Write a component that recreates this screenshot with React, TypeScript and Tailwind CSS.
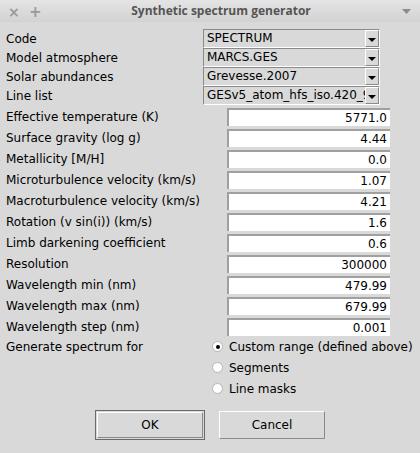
import React from "react";

const font = { fontFamily: '"DejaVu Sans", sans-serif' };

function Dropdown({ value }: { value: string }) {
  return (
    <div className="flex h-[19px] w-[177px] border border-t-[#8a8a8a] border-l-[#8a8a8a] border-r-[#ffffff] border-b-[#ffffff] bg-[#d9d9d9]">
      <div className="flex-1 overflow-hidden whitespace-nowrap pl-[3px] text-[12px] leading-[17px] text-black">{value}</div>
      <div className="flex h-[17px] w-[14px] items-center justify-center border border-t-[#ffffff] border-l-[#ffffff] border-r-[#8a8a8a] border-b-[#8a8a8a] bg-[#d9d9d9]">
        <svg width="8" height="6" viewBox="0 0 8 6" className="mt-[5px]">
          <path d="M0 0 L8 0 L4 4 Z" fill="#000" />
        </svg>
      </div>
    </div>
  );
}

function Entry({ value }: { value: string }) {
  return (
    <div className="h-[18px] w-[163px] border-t-2 border-l-2 border-t-[#a0a0a0] border-l-[#a0a0a0] bg-white pr-[3px] text-right text-[12px] leading-[16px] text-black">
      {value}
    </div>
  );
}

function Radio({ checked, label }: { checked?: boolean; label: string }) {
  return (
    <div className="flex h-[21px] items-center">
      <div className="ml-[212px] flex h-[11px] w-[11px] items-center justify-center rounded-full border border-[#b5b5b5] bg-white">
        {checked && <div className="h-[4px] w-[4px] rounded-full bg-black" />}
      </div>
      <span className="ml-[6px] text-[12px] text-black">{label}</span>
    </div>
  );
}

export default function App() {
  const dropdowns: [string, string][] = [
    ["Code", "SPECTRUM"],
    ["Model atmosphere", "MARCS.GES"],
    ["Solar abundances", "Grevesse.2007"],
    ["Line list", "GESv5_atom_hfs_iso.420_920.txt"],
  ];
  const entries: [string, string][] = [
    ["Effective temperature (K)", "5771.0"],
    ["Surface gravity (log g)", "4.44"],
    ["Metallicity [M/H]", "0.0"],
    ["Microturbulence velocity (km/s)", "1.07"],
    ["Macroturbulence velocity (km/s)", "4.21"],
    ["Rotation (v sin(i)) (km/s)", "1.6"],
    ["Limb darkening coefficient", "0.6"],
    ["Resolution", "300000"],
    ["Wavelength min (nm)", "479.99"],
    ["Wavelength max (nm)", "679.99"],
    ["Wavelength step (nm)", "0.001"],
  ];
  return (
    <div className="flex h-[453px] w-[420px] flex-col bg-[#d9d9d9]" style={font}>
      <div className="relative flex h-[22px] items-center bg-gradient-to-b from-[#e4e4e4] to-[#d2d2d2]">
        <span className="absolute left-[8px] top-[2px] text-[14px] font-bold text-[#9a9a9a]">×</span>
        <span className="absolute left-[29px] top-[1px] text-[15px] font-bold text-[#9a9a9a]">+</span>
        <div className="flex-1 pl-[22px] text-center text-[12px] font-bold text-[#555555]" style={{ fontFamily: '"Open Sans", sans-serif' }}>
          Synthetic spectrum generator
        </div>
        <svg width="9" height="6" viewBox="0 0 9 6" className="absolute left-[402px] top-[9px]">
          <path d="M0 0 L9 0 L4.5 5 Z" fill="#8a8a8a" />
        </svg>
      </div>
      <div className="pt-[7px]">
        {dropdowns.map(([l, v]) => (
          <div key={l} className="flex h-[19px] items-center">
            <div className="w-[203px] pl-[6px] text-[12px] text-black">{l}</div>
            <Dropdown value={v} />
          </div>
        ))}
        <div className="h-[3px]" />
        {entries.map(([l, v]) => (
          <div key={l} className="flex h-[21px] items-start">
            <div className="w-[227px] pl-[6px] pt-[1px] text-[12px] leading-[16px] text-black">{l}</div>
            <Entry value={v} />
          </div>
        ))}
        <div className="-mt-[3px]">
          <div className="relative">
            <span className="absolute left-[6px] top-[2px] text-[12px] text-black">Generate spectrum for</span>
            <Radio checked label="Custom range (defined above)" />
          </div>
          <Radio label="Segments" />
          <Radio label="Line masks" />
        </div>
        <div className="mt-[11px] flex items-center">
          <div className="ml-[95px] border border-[#6a6a6a] p-[1px]">
            <div className="flex h-[26px] w-[106px] items-center justify-center border border-t-[#ffffff] border-l-[#ffffff] border-r-[#8a8a8a] border-b-[#8a8a8a] text-[12px] text-black">
              OK
            </div>
          </div>
          <div className="ml-[14px] flex h-[28px] w-[106px] items-center justify-center border border-t-[#ffffff] border-l-[#ffffff] border-r-[#8a8a8a] border-b-[#8a8a8a] text-[12px] text-black">
            Cancel
          </div>
        </div>
      </div>
    </div>
  );
}
